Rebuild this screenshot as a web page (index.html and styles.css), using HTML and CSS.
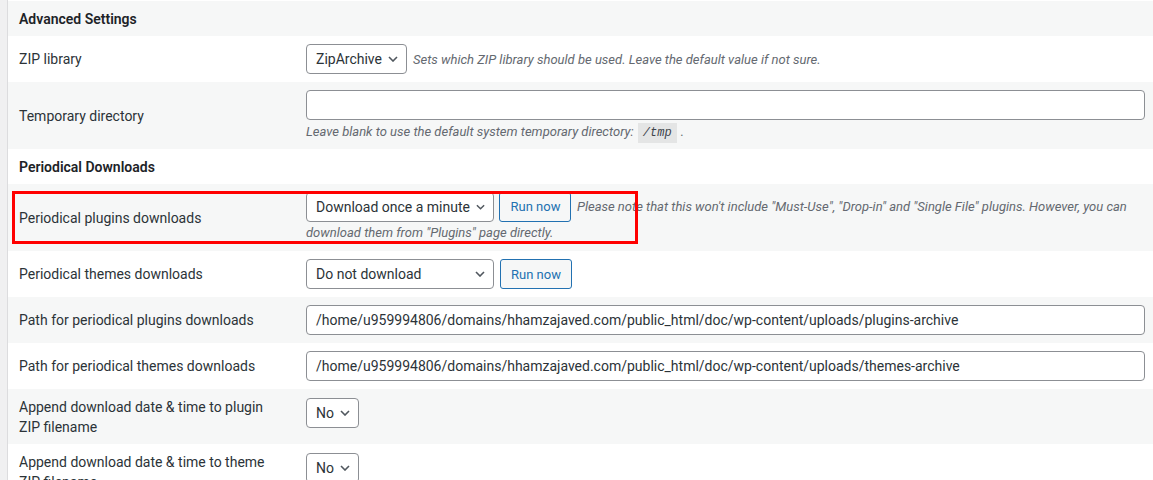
FILE: index.html
```html
<!DOCTYPE html>
<html lang="en">
<head>
<meta charset="utf-8">
<title>Advanced Settings</title>
<link rel="stylesheet" href="styles.css">
</head>
<body>
<div class="wrap">
  <div class="panel">
    <div class="row head"><div class="th-h">Advanced Settings</div></div>

    <div class="row">
      <div class="th">ZIP library</div>
      <div class="td">
        <span class="select"><span class="val">ZipArchive</span><svg class="chev" width="10" height="6" viewBox="0 0 10 6"><path d="M1 1l4 4 4-4" /></svg></span>
        <span class="desc">Sets which ZIP library should be used. Leave the default value if not sure.</span>
      </div>
    </div>

    <div class="row">
      <div class="th">Temporary directory</div>
      <div class="td">
        <div class="input"></div>
        <p class="desc block">Leave blank to use the default system temporary directory: <code>/tmp</code> .</p>
      </div>
    </div>

    <div class="row head"><div class="th-h">Periodical Downloads</div></div>

    <div class="row marked">
      <div class="th">Periodical plugins downloads</div>
      <div class="td flow">
        <span class="select wide"><span class="val">Download once a minute</span><svg class="chev" width="10" height="6" viewBox="0 0 10 6"><path d="M1 1l4 4 4-4" /></svg></span>
        <span class="btn">Run now</span>
        <span class="desc">Please note that this won't include "Must-Use", "Drop-in" and "Single File" plugins. However, you can download them from "Plugins" page directly.</span>
      </div>
      <div class="annot"></div>
    </div>

    <div class="row">
      <div class="th">Periodical themes downloads</div>
      <div class="td">
        <span class="select wide"><span class="val">Do not download</span><svg class="chev" width="10" height="6" viewBox="0 0 10 6"><path d="M1 1l4 4 4-4" /></svg></span>
        <span class="btn">Run now</span>
      </div>
    </div>

    <div class="row">
      <div class="th">Path for periodical plugins downloads</div>
      <div class="td">
        <div class="input">/home/u959994806/domains/hhamzajaved.com/public_html/doc/wp-content/uploads/plugins-archive</div>
      </div>
    </div>

    <div class="row">
      <div class="th">Path for periodical themes downloads</div>
      <div class="td">
        <div class="input">/home/u959994806/domains/hhamzajaved.com/public_html/doc/wp-content/uploads/themes-archive</div>
      </div>
    </div>

    <div class="row top">
      <div class="th">Append download date &amp; time to plugin ZIP filename</div>
      <div class="td">
        <span class="select"><span class="val">No</span><svg class="chev" width="10" height="6" viewBox="0 0 10 6"><path d="M1 1l4 4 4-4" /></svg></span>
      </div>
    </div>

    <div class="row top">
      <div class="th">Append download date &amp; time to theme ZIP filename</div>
      <div class="td">
        <span class="select"><span class="val">No</span><svg class="chev" width="10" height="6" viewBox="0 0 10 6"><path d="M1 1l4 4 4-4" /></svg></span>
      </div>
    </div>
  </div>
</div>
</body>
</html>
```

FILE: styles.css
```css
* { box-sizing: border-box; }

html, body {
  margin: 0;
  padding: 0;
  background: #f0f0f1;
  font-family: Roboto, "Liberation Sans", sans-serif;
  font-size: 14px;
  color: #1d2327;
  overflow: hidden;
}

.wrap {
  padding-left: 7px;
  height: 480px;
}

.panel {
  background: #fff;
  border-left: 1px solid #dcdcde;
  padding-top: 1px;
  min-height: 100%;
}

.row {
  position: relative;
  display: grid;
  grid-template-columns: 298px 1fr;
  align-items: center;
  background: #fff;
}

.row:nth-child(odd) { background: #f6f7f7; }

.row.head {
  display: block;
  padding: 9px 11px 7px;
  line-height: 19px;
}

.th-h {
  font-weight: 600;
  color: #1d2327;
}

.th {
  padding: 9px 26px 7px 11px;
  line-height: 19.5px;
  color: #2c3338;
}

.row.top { align-items: start; }
.row.top .td { padding-top: 9px; }

.td {
  padding: 8px 8px 8px 0;
  display: flex;
  align-items: center;
  gap: 0 6px;
  flex-wrap: wrap;
}

.td.flow {
  display: block;
  line-height: 20px;
}

.td.flow .select,
.td.flow .btn { vertical-align: middle; }
.td.flow .btn { margin-left: 2px; }
.td.flow .desc { margin-left: 2px; }

.select {
  display: inline-flex;
  align-items: center;
  justify-content: space-between;
  gap: 6px;
  height: 30px;
  padding: 0 8px 0 9px;
  border: 1px solid #8c8f94;
  border-radius: 4px;
  background: #fff;
  color: #2c3338;
  font-size: 14px;
  line-height: 28px;
  white-space: nowrap;
}

.select.wide { width: 188px; }

.chev path {
  fill: none;
  stroke: #50575e;
  stroke-width: 1.6;
}

.btn {
  display: inline-flex;
  align-items: center;
  height: 30px;
  padding: 0 10px;
  border: 1px solid #2271b1;
  border-radius: 3px;
  background: #f6f7f7;
  color: #2271b1;
  font-size: 13px;
  white-space: nowrap;
}

.desc {
  font-style: italic;
  font-size: 13px;
  color: #646970;
}

.desc.block {
  margin: 2px 0 0;
  line-height: 19px;
  width: 100%;
}

.input {
  width: 100%;
  height: 30px;
  padding: 0 9px;
  border: 1px solid #8c8f94;
  border-radius: 4px;
  background: #fff;
  color: #2c3338;
  font-size: 14px;
  line-height: 28px;
  white-space: nowrap;
  overflow: hidden;
}

code {
  font-family: "Liberation Mono", "DejaVu Sans Mono", monospace;
  font-size: 12px;
  line-height: 1;
  padding: 3px 5px 3px;
  margin: 0 1px;
  background: rgba(0, 0, 0, 0.07);
  color: #3c434a;
}

.annot {
  position: absolute;
  left: 4px;
  top: 7px;
  width: 626px;
  height: 53px;
  border: 3px solid #ff0000;
  pointer-events: none;
}
```
